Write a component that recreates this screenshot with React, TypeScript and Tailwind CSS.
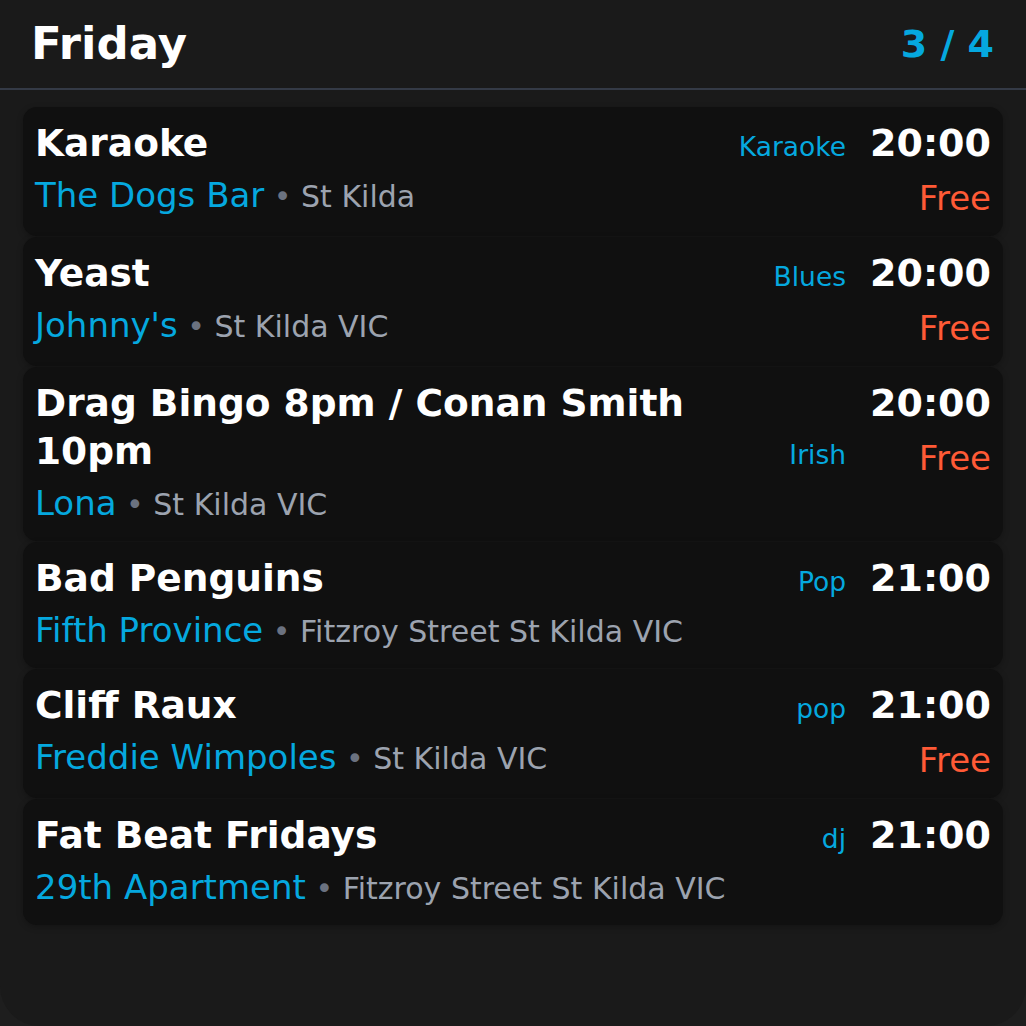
const events = [
  { title: 'Karaoke', venue: 'The Dogs Bar', area: 'St Kilda', genre: 'Karaoke', time: '20:00', free: true },
  { title: 'Yeast', venue: "Johnny's", area: 'St Kilda VIC', genre: 'Blues', time: '20:00', free: true },
  { title: 'Drag Bingo 8pm / Conan Smith 10pm', venue: 'Lona', area: 'St Kilda VIC', genre: 'Irish', time: '20:00', free: true },
  { title: 'Bad Penguins', venue: 'Fifth Province', area: 'Fitzroy Street St Kilda VIC', genre: 'Pop', time: '21:00', free: false },
  { title: 'Cliff Raux', venue: 'Freddie Wimpoles', area: 'St Kilda VIC', genre: 'pop', time: '21:00', free: true },
  { title: 'Fat Beat Fridays', venue: '29th Apartment', area: 'Fitzroy Street St Kilda VIC', genre: 'dj', time: '21:00', free: false },
];

export default function App() {
  return (
    <div className="min-h-[1026px] bg-[#1e1e1e] font-['DejaVu_Sans',sans-serif]">
      <div className="h-[1026px] overflow-hidden rounded-b-[40px] bg-[#1a1a1a]">
        <div className="flex h-[90px] items-center justify-between border-b-2 border-[#343a46] pl-[31px] pr-[32px]">
          <h1 className="text-[45px] font-bold text-white">Friday</h1>
          <span className="text-[38px] font-bold text-[#05a8df]">3 / 4</span>
        </div>

        <div className="mx-[23px] mt-[17px] flex flex-col gap-px">
          {events.map((ev) => (
            <div
              key={ev.title}
              className="flex rounded-[14px] bg-[#101010] pb-[18px] pl-3 pr-3 pt-3 shadow-[0_2px_6px_rgba(0,0,0,0.25)]"
            >
              <div className="min-w-0 flex-1">
                <div className="flex items-end gap-6">
                  <h3 className="flex-1 text-[37.5px] font-bold leading-[48px] text-white">{ev.title}</h3>
                  <span className="text-[26.5px] leading-[40px] text-[#05a8df]">{ev.genre}</span>
                </div>
                <div className="mt-2 h-[40px] whitespace-nowrap text-[34px] leading-[40px]">
                  <span className="text-[#05a8df]">{ev.venue}</span>
                  <span className="text-[30px] leading-none text-[#6b7280]"> • </span>
                  <span className="text-[30px] leading-none text-[#9ca3af]">{ev.area}</span>
                </div>
              </div>
              <div className="ml-6 flex flex-col items-end">
                <span className="text-[38px] font-bold leading-[48px] text-white">{ev.time}</span>
                {ev.free && (
                  <span className="mt-[11px] text-[34px] leading-[40px] text-[#ff5a36]">Free</span>
                )}
              </div>
            </div>
          ))}
        </div>
      </div>
    </div>
  );
}
